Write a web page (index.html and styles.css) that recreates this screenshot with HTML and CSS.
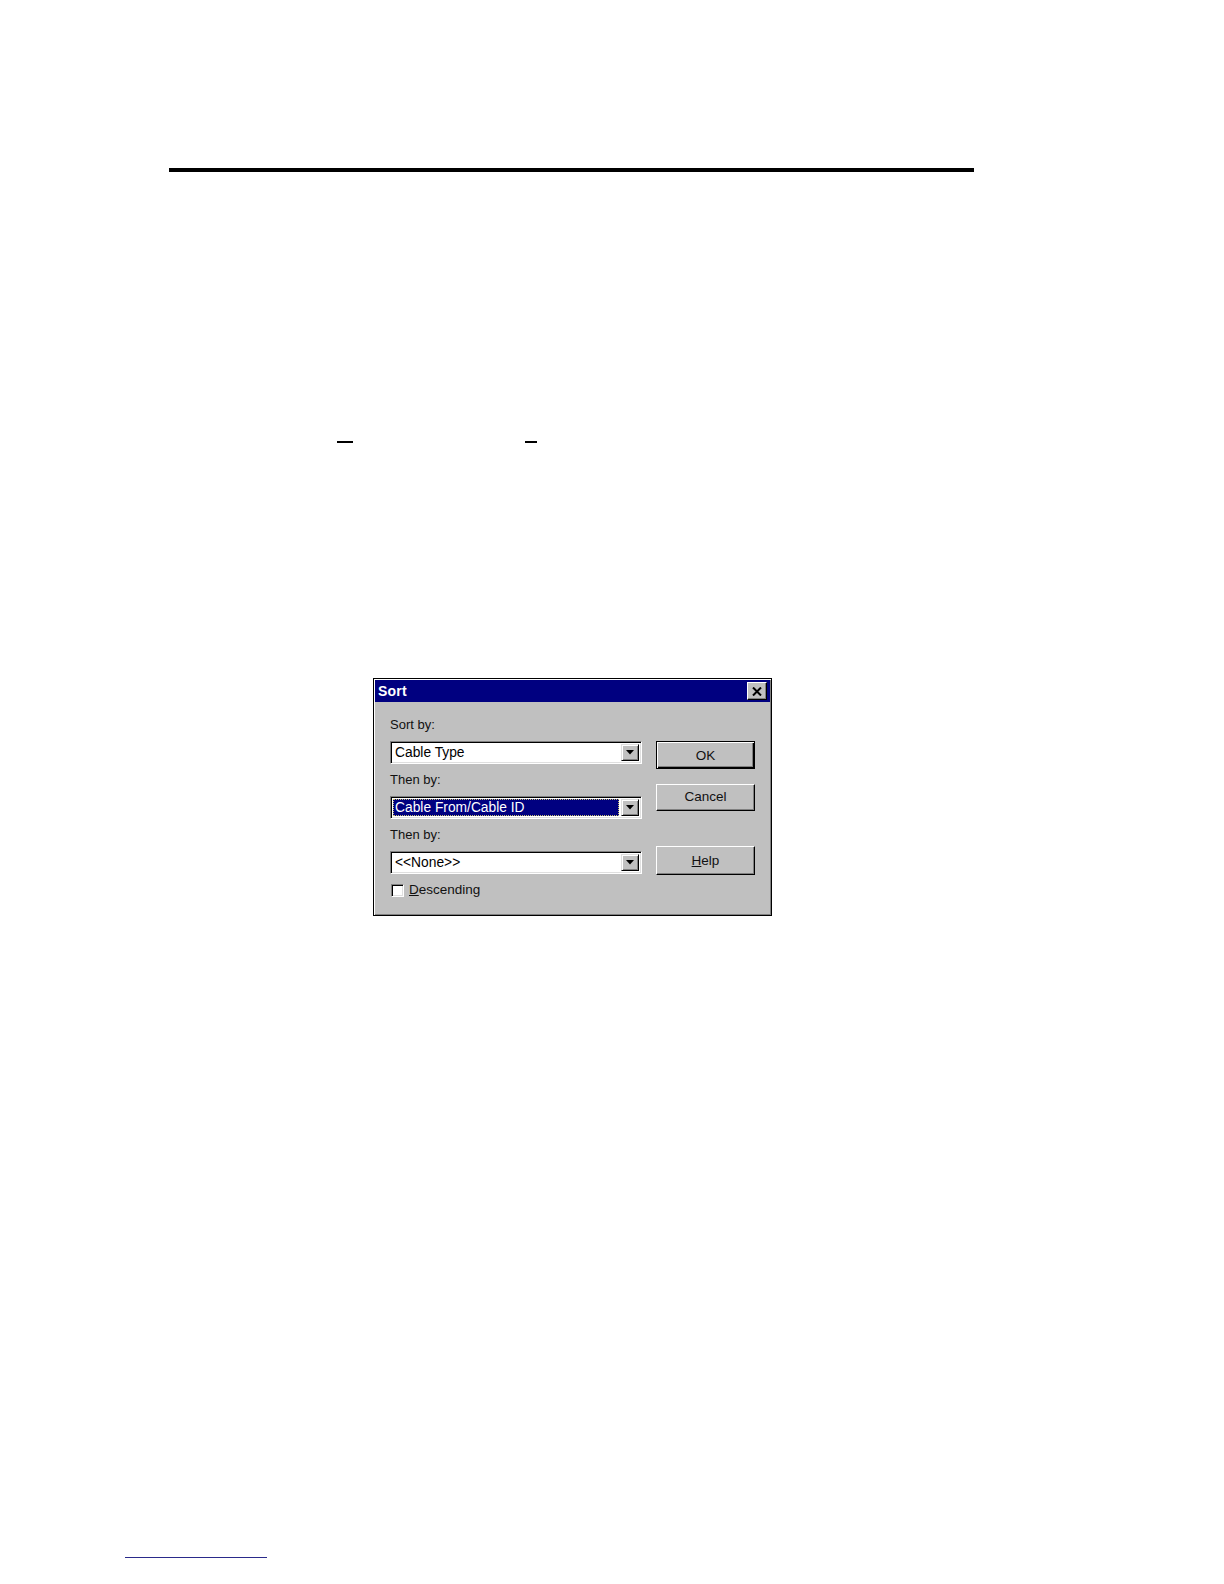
FILE: index.html
```html
<!DOCTYPE html>
<html>
<head>
<meta charset="utf-8">
<link rel="stylesheet" href="styles.css">
</head>
<body>
<div class="page">
  <div class="rule"></div>
  <div class="dashes"><span class="dash dash-a"></span><span class="dash dash-b"></span></div>
  <div class="dialog">
    <div class="titlebar">
      <span class="title">Sort</span>
      <span class="close"><svg width="10" height="9" viewBox="0 0 10 9"><path d="M1 0.5 L9 8.5 M9 0.5 L1 8.5" stroke="#000" stroke-width="2"/></svg></span>
    </div>
    <div class="dbody">
      <div class="leftcol">
        <div class="label">Sort by:</div>
        <div class="combo"><span class="ctext">Cable Type</span><span class="arrow"><svg width="8" height="5" viewBox="0 0 8 5"><path d="M0 0 H8 L4 4.5 Z" fill="#000"/></svg></span></div>
        <div class="label">Then by:</div>
        <div class="combo"><span class="ctext selected">Cable From/Cable ID</span><span class="arrow"><svg width="8" height="5" viewBox="0 0 8 5"><path d="M0 0 H8 L4 4.5 Z" fill="#000"/></svg></span></div>
        <div class="label">Then by:</div>
        <div class="combo"><span class="ctext">&lt;&lt;None&gt;&gt;</span><span class="arrow"><svg width="8" height="5" viewBox="0 0 8 5"><path d="M0 0 H8 L4 4.5 Z" fill="#000"/></svg></span></div>
        <div class="checkrow"><span class="checkbox"></span><span class="label-inline"><u>D</u>escending</span></div>
      </div>
      <div class="rightcol">
        <div class="btn btn-default">OK</div>
        <div class="btn btn-cancel">Cancel</div>
        <div class="btn btn-help"><u>H</u>elp</div>
      </div>
    </div>
  </div>
  <div class="footline"></div>
</div>
</body>
</html>
```

FILE: styles.css
```css
html, body {
  margin: 0;
  padding: 0;
  background: #fff;
}
body {
  font-family: "Liberation Sans", Arial, sans-serif;
}
.page {
  padding-top: 168px;
  padding-bottom: 10px;
}
.rule {
  margin-left: 169px;
  width: 805px;
  height: 4px;
  background: #000;
}
.dashes {
  display: flex;
  margin-top: 269px;
  height: 2px;
}
.dash {
  display: block;
  height: 2px;
  background: #000;
}
.dash-a {
  margin-left: 337px;
  width: 16px;
}
.dash-b {
  margin-left: 172px;
  width: 12px;
}
.dialog {
  margin-top: 235px;
  margin-left: 373px;
  width: 399px;
  height: 238px;
  box-sizing: border-box;
  background: #c0c0c0;
  border: 1px solid #000;
  padding: 1px;
  box-shadow: inset 1px 1px 0 #fff, inset -1px -1px 0 #808080;
  display: flex;
  flex-direction: column;
}
.titlebar {
  height: 22px;
  background: #000080;
  display: flex;
  align-items: center;
  justify-content: space-between;
  padding: 0 3px;
}
.title {
  color: #fff;
  font-weight: bold;
  font-size: 14px;
  letter-spacing: 0.2px;
}
.close {
  width: 20px;
  height: 18px;
  box-sizing: border-box;
  background: #c0c0c0;
  border-top: 1px solid #fff;
  border-left: 1px solid #fff;
  border-right: 1px solid #000;
  border-bottom: 1px solid #000;
  box-shadow: inset -1px -1px 0 #808080;
  display: flex;
  align-items: center;
  justify-content: center;
}
.dbody {
  display: flex;
  gap: 14px;
  padding: 15px 0 0 15px;
}
.leftcol {
  width: 252px;
  display: flex;
  flex-direction: column;
}
.label {
  font-size: 13px;
  line-height: 16px;
  height: 16px;
  color: #111;
  margin-bottom: 8px;
}
.combo {
  height: 23px;
  box-sizing: border-box;
  background: #fff;
  border-top: 1px solid #808080;
  border-left: 1px solid #808080;
  border-right: 1px solid #fff;
  border-bottom: 1px solid #fff;
  box-shadow: inset 1px 1px 0 #000, inset -1px -1px 0 #dfdfdf;
  display: flex;
  align-items: center;
  padding: 2px;
  margin-bottom: 8px;
}
.ctext {
  flex: 1;
  font-size: 13.8px;
  line-height: 17px;
  height: 17px;
  padding-left: 2px;
  color: #000;
  white-space: nowrap;
}
.ctext.selected {
  background: #000080;
  color: #fff;
  outline: 1px dotted #c8c070;
  outline-offset: -1px;
  margin-right: 2px;
}
.arrow {
  width: 18px;
  height: 17px;
  box-sizing: border-box;
  background: #c0c0c0;
  border-top: 1px solid #dfdfdf;
  border-left: 1px solid #dfdfdf;
  border-right: 1px solid #000;
  border-bottom: 1px solid #000;
  box-shadow: inset 1px 1px 0 #fff, inset -1px -1px 0 #808080;
  display: flex;
  align-items: center;
  justify-content: center;
}
.checkrow {
  display: flex;
  align-items: center;
  height: 16px;
  gap: 5px;
  padding-left: 1px;
}
.checkbox {
  width: 13px;
  height: 13px;
  box-sizing: border-box;
  background: #fff;
  border-top: 1px solid #808080;
  border-left: 1px solid #808080;
  border-right: 1px solid #fff;
  border-bottom: 1px solid #fff;
  box-shadow: inset 1px 1px 0 #000, inset -1px -1px 0 #dfdfdf;
}
.label-inline {
  font-size: 13.5px;
  line-height: 16px;
  color: #111;
}
.rightcol {
  width: 99px;
  display: flex;
  flex-direction: column;
  padding-top: 24px;
}
.btn {
  box-sizing: border-box;
  background: #c0c0c0;
  border-top: 1px solid #fff;
  border-left: 1px solid #fff;
  border-right: 1px solid #000;
  border-bottom: 1px solid #000;
  box-shadow: inset -1px -1px 0 #808080;
  display: flex;
  align-items: center;
  justify-content: center;
  font-size: 13.5px;
  color: #111;
}
.btn-default {
  height: 28px;
  border: 1px solid #000;
  box-shadow: inset 1px 1px 0 #fff, inset -1px -1px 0 #000, inset -2px -2px 0 #808080;
}
.btn-cancel {
  height: 27px;
  margin-top: 15px;
  padding-bottom: 2px;
}
.btn-help {
  height: 29px;
  margin-top: 35px;
}
.footline {
  margin-top: 641px;
  margin-left: 125px;
  width: 142px;
  height: 1px;
  background: #2a2a8a;
}
```
